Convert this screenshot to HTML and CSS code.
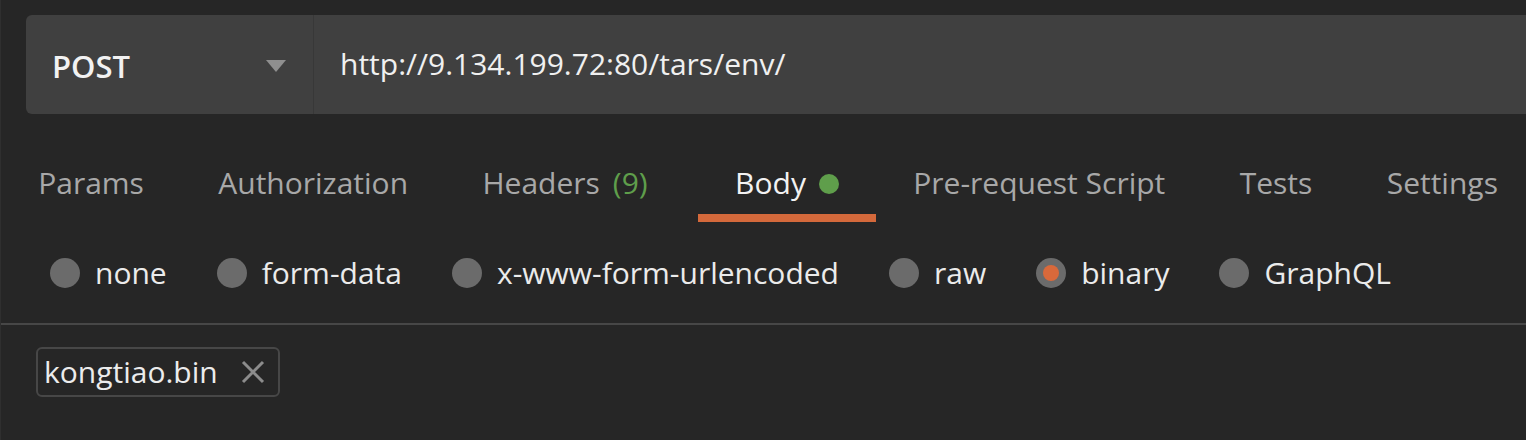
FILE: index.html
```html
<!DOCTYPE html>
<html>
<head>
<meta charset="utf-8">
<link rel="stylesheet" href="styles.css">
</head>
<body>
<div class="page">
  <div class="request-bar">
    <div class="method">
      <span class="method-name">POST</span>
      <span class="caret"></span>
    </div>
    <div class="url">http://9.134.199.72:80/tars/env/</div>
  </div>

  <div class="tabs">
    <div class="tab">Params</div>
    <div class="tab">Authorization</div>
    <div class="tab tab-headers">Headers <span class="count">(9)</span></div>
    <div class="tab active">Body <span class="dot"></span></div>
    <div class="tab">Pre-request Script</div>
    <div class="tab">Tests</div>
    <div class="tab">Settings</div>
  </div>

  <div class="body-types">
    <label class="radio"><span class="circle"></span>none</label>
    <label class="radio"><span class="circle"></span>form-data</label>
    <label class="radio"><span class="circle"></span>x-www-form-urlencoded</label>
    <label class="radio"><span class="circle"></span>raw</label>
    <label class="radio"><span class="circle checked"></span>binary</label>
    <label class="radio"><span class="circle"></span>GraphQL</label>
  </div>

  <div class="file-area">
    <div class="file-chip">
      <span class="file-name">kongtiao.bin</span>
      <svg class="close" width="24" height="24" viewBox="0 0 24 24"><path d="M2 2 L22 22 M22 2 L2 22" stroke="#8c8c8c" stroke-width="3" fill="none"/></svg>
    </div>
  </div>
</div>
</body>
</html>
```

FILE: styles.css
```css
html, body {
  margin: 0;
  padding: 0;
  background: #262626;
  overflow: hidden;
}
.page {
  width: 1526px;
  height: 440px;
  font-family: "Open Sans", "Noto Sans", sans-serif;
  border-left: 1px solid #2f2f2f;
  box-sizing: border-box;
  overflow: hidden;
}
.request-bar {
  margin: 15px 0 0 25px;
  height: 99px;
  background: #404040;
  border-radius: 6px 0 0 6px;
  display: flex;
  align-items: stretch;
}
.method {
  width: 288px;
  box-sizing: border-box;
  padding: 0 27px 0 26px;
  display: flex;
  align-items: center;
  justify-content: space-between;
  border-right: 1px solid #383838;
}
.method-name {
  font-size: 31px;
  font-weight: 600;
  color: #f2f2f2;
  margin-top: 2px;
}
.caret {
  width: 0;
  height: 0;
  border-left: 10px solid transparent;
  border-right: 10px solid transparent;
  border-top: 12px solid #8f8f8f;
  margin-top: 3px;
}
.url {
  display: flex;
  align-items: center;
  padding-left: 26px;
  font-size: 30px;
  color: #f0f0f0;
  margin-top: -2px;
}
.tabs {
  display: flex;
  margin-top: 44px;
  height: 64px;
  overflow: hidden;
}
.tab {
  flex-shrink: 0;
  white-space: nowrap;
  padding: 4px 37.2px 0;
  font-size: 30px;
  line-height: 41px;
  color: #a8a8a8;
  display: flex;
  align-items: flex-start;
  gap: 13px;
  box-sizing: border-box;
  border-bottom: 8px solid transparent;
}
.tab-headers {
  margin-right: 13px;
}
.tab .count {
  color: #5f9e4b;
}
.tab.active {
  color: #f2f2f2;
  border-bottom-color: #d4693b;
}
.dot {
  width: 20px;
  height: 20px;
  border-radius: 50%;
  background: #5f9e4b;
  margin-top: 12px;
}
.body-types {
  display: flex;
  align-items: center;
  height: 101px;
  padding-left: 50px;
  gap: 50px;
  border-bottom: 2px solid #474747;
  margin-left: -1px;
}
.radio {
  display: flex;
  align-items: center;
  gap: 15px;
  font-size: 30px;
  color: #ebebeb;
  white-space: nowrap;
}
.circle {
  width: 30px;
  height: 30px;
  border-radius: 50%;
  background: #6b6b6b;
  display: flex;
  align-items: center;
  justify-content: center;
}
.circle.checked::after {
  content: "";
  width: 16px;
  height: 16px;
  border-radius: 50%;
  background: #d9693b;
}
.file-area {
  padding: 22px 0 0 35px;
}
.file-chip {
  display: inline-flex;
  align-items: center;
  height: 50px;
  box-sizing: border-box;
  border: 2px solid #474747;
  border-radius: 6px;
  padding: 0 13px 0 6px;
  gap: 23px;
}
.file-name {
  font-size: 30px;
  color: #ececec;
  margin-top: -2px;
}
.close {
  display: block;
}
```
